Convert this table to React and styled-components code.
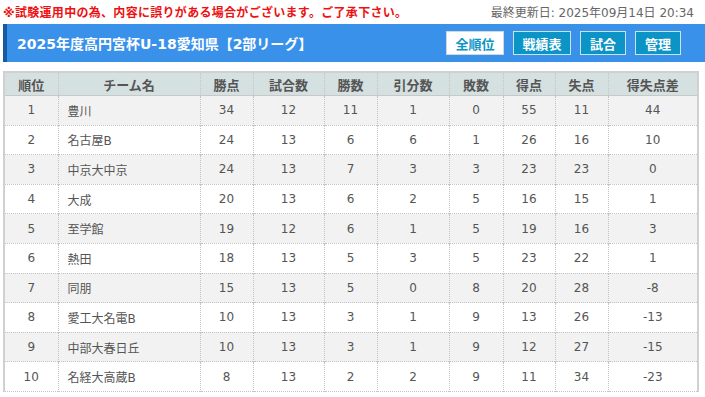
import React from "react";
import styled, { createGlobalStyle } from "styled-components";

const GlobalStyle = createGlobalStyle`
  body {
    margin: 0;
    background: #fff;
    font-family: "DejaVu Sans", "Noto Sans CJK JP", sans-serif;
    color: #555;
  }
`;

const columns = [
  { label: "順位", width: 54 },
  { label: "チーム名", width: 142, left: true },
  { label: "勝点", width: 53 },
  { label: "試合数", width: 71 },
  { label: "勝数", width: 53 },
  { label: "引分数", width: 72 },
  { label: "敗数", width: 54 },
  { label: "得点", width: 52 },
  { label: "失点", width: 53 },
  { label: "得失点差", width: 90 },
];

const rows = [
  [1, "豊川", 34, 12, 11, 1, 0, 55, 11, 44],
  [2, "名古屋B", 24, 13, 6, 6, 1, 26, 16, 10],
  [3, "中京大中京", 24, 13, 7, 3, 3, 23, 23, 0],
  [4, "大成", 20, 13, 6, 2, 5, 16, 15, 1],
  [5, "至学館", 19, 12, 6, 1, 5, 19, 16, 3],
  [6, "熱田", 18, 13, 5, 3, 5, 23, 22, 1],
  [7, "同朋", 15, 13, 5, 0, 8, 20, 28, -8],
  [8, "愛工大名電B", 10, 13, 3, 1, 9, 13, 26, -13],
  [9, "中部大春日丘", 10, 13, 3, 1, 9, 12, 27, -15],
  [10, "名経大高蔵B", 8, 13, 2, 2, 9, 11, 34, -23],
];

const buttons = ["全順位", "戦績表", "試合", "管理"];

export default function App() {
  return (
    <Page>
      <GlobalStyle />
      <Notice>
        <Warning>※試験運用中の為、内容に誤りがある場合がございます。ご了承下さい。</Warning>
        <Updated>最終更新日: 2025年09月14日 20:34</Updated>
      </Notice>
      <TitleBar>
        <Title>2025年度高円宮杯U-18愛知県【2部リーグ】</Title>
        <Nav>
          {buttons.map((b, i) => (
            <NavButton key={b} $active={i === 0} $w={b.length === 3 ? 58 : 46}>
              {b}
            </NavButton>
          ))}
        </Nav>
      </TitleBar>
      <Table>
        <colgroup>
          {columns.map((c) => (
            <col key={c.label} style={{ width: c.width }} />
          ))}
        </colgroup>
        <thead>
          <tr>
            {columns.map((c) => (
              <Th key={c.label}>{c.label}</Th>
            ))}
          </tr>
        </thead>
        <tbody>
          {rows.map((r, i) => (
            <Row key={r[0]} $odd={i % 2 === 0}>
              {r.map((v, j) => (
                <Td key={j} $left={columns[j].left}>
                  {v}
                </Td>
              ))}
            </Row>
          ))}
        </tbody>
      </Table>
    </Page>
  );
}

const Page = styled.div`
  width: 705px;
  overflow: hidden;
`;

const Notice = styled.div`
  display: flex;
  justify-content: space-between;
  align-items: center;
  height: 22px;
  padding: 0 11px 0 3px;
  font-size: 12px;
`;

const Warning = styled.span`
  color: #ee1111;
  font-weight: bold;
  letter-spacing: 0.3px;
`;

const Updated = styled.span`
  color: #666;
`;

const TitleBar = styled.div`
  display: flex;
  align-items: center;
  justify-content: space-between;
  height: 38px;
  margin: 2px 0 0 3px;
  padding: 0 24px 0 10px;
  background: #3a91ea;
  border-left: 4px solid #175aa0;
`;

const Title = styled.h1`
  margin: 0;
  color: #fff;
  font-size: 14px;
  font-weight: bold;
`;

const Nav = styled.div`
  display: flex;
  gap: 9px;
`;

const NavButton = styled.div`
  display: flex;
  align-items: center;
  justify-content: center;
  width: ${(p) => p.$w}px;
  height: 24px;
  box-sizing: border-box;
  font-size: 13px;
  font-weight: bold;
  background: ${(p) => (p.$active ? "#fff" : "#0c94c6")};
  color: ${(p) => (p.$active ? "#0c94c6" : "#fff")};
  border: 1px solid ${(p) => (p.$active ? "#cfd8dc" : "#c8e2ee")};
`;

const Table = styled.table`
  margin: 9px 0 0 3px;
  width: 694px;
  table-layout: fixed;
  border-collapse: collapse;
  border: 2px solid #d0d0d0;
  border-bottom: 1px dotted #c4c4c4;
  font-size: 12px;
`;

const Th = styled.th`
  height: 22px;
  padding: 0;
  background: #d5e0e1;
  color: #555;
  font-size: 13px;
  font-weight: bold;
  border-left: 1px dotted #c4c4c4;
  border-bottom: 1px solid #c8c8c8;
`;

const Row = styled.tr`
  background: ${(p) => (p.$odd ? "#f2f2f2" : "#fff")};
`;

const Td = styled.td`
  height: 28.6px;
  padding: 0 ${(p) => (p.$left ? "9px" : "0")};
  text-align: ${(p) => (p.$left ? "left" : "center")};
  border-left: 1px dotted #c4c4c4;
  border-top: 1px dotted #c4c4c4;
  color: #555;
`;
